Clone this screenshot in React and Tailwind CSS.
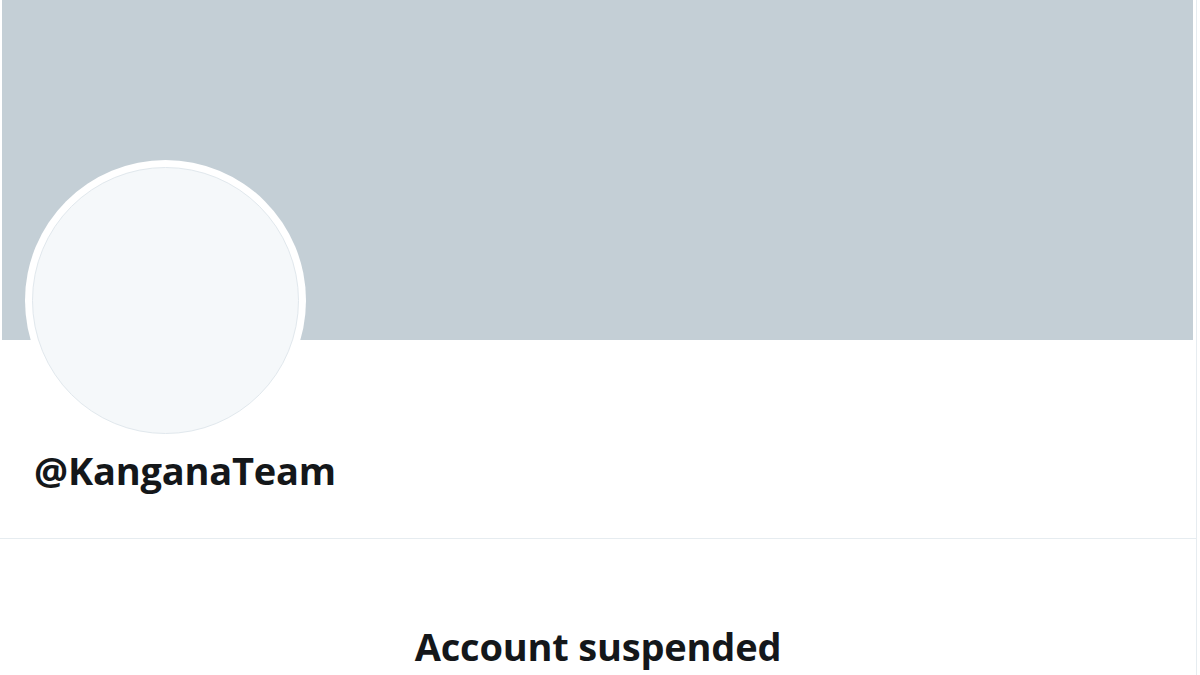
import React from 'react';

const App = () => {
	return (
		<div className="w-[1200px] h-[675px] bg-white overflow-hidden" style={{fontFamily: '"Open Sans", "Noto Sans", sans-serif'}}>
			<div className="w-[1197px] h-full border-r border-[#e6ecf0]">
				<div className="ml-[2px] mr-[3px] h-[340px] bg-[#c4cfd6]"></div>
				<div className="ml-[25px] -mt-[180px] w-[281px] h-[281px] rounded-full bg-white p-[7px]">
					<div className="w-full h-full rounded-full bg-[#f5f8fa] border border-[#e1e8ed]"></div>
				</div>
				<div className="pl-[34px] pt-[5px] h-[98px] border-b border-[#e6ecf0]">
					<h2 className="text-[38px] leading-[48px] font-bold text-[#14171a] tracking-[-0.2px]">@KanganaTeam</h2>
				</div>
				<div className="pt-[83px] text-center">
					<h1 className="text-[38px] leading-[48px] font-bold text-[#14171a] tracking-[-0.2px]">Account suspended</h1>
				</div>
			</div>
		</div>
	);
};

export default App;
